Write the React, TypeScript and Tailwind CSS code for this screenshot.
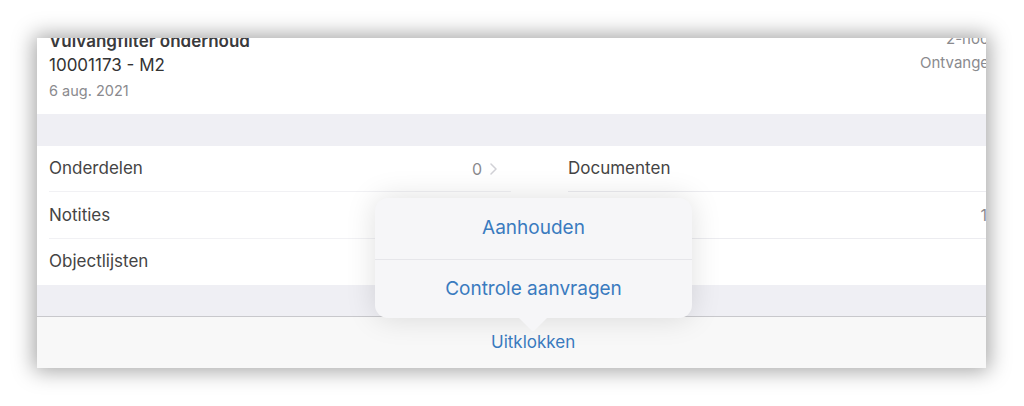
import React from 'react'

const rowsLeft = [
    { label: 'Onderdelen', value: '0' },
    { label: 'Notities', value: '' },
    { label: 'Objectlijsten', value: '' },
]

const rowsRight = [
    { label: 'Documenten', value: '' },
    { label: 'Meldingen', value: '1' },
    { label: '', value: '' },
]

const Chevron = () => (
    <svg width="7" height="12" viewBox="0 0 7 12" className="ml-[8px]">
        <path d="M1 1l5 5-5 5" fill="none" stroke="#d1d1d6" strokeWidth="1.5" strokeLinecap="round" strokeLinejoin="round" />
    </svg>
)

export default function App() {
    return (
        <div className="w-[1024px] h-[406px] bg-white overflow-hidden font-['Inter',_'Liberation_Sans',_sans-serif]">
            <div className="relative ml-[37px] mt-[38px] w-[949px] h-[330px] bg-white overflow-hidden shadow-[0_0_20px_3px_rgba(0,0,0,0.36)]">
                {/* Header */}
                <div className="flex h-[76px] bg-white">
                    <div className="flex-1 pl-[12px] flex flex-col">
                        <div className="mt-[-9px] h-[24px] leading-[24px] text-[17px] font-semibold text-[#3a3a3c] whitespace-nowrap">Vulvangfilter onderhoud</div>
                        <div className="h-[24px] leading-[24px] text-[17px] text-[#333]">10001173 - M2</div>
                        <div className="mt-[4px] h-[20px] leading-[20px] text-[14.5px] text-[#8a8a8e]">6 aug. 2021</div>
                    </div>
                    <div className="shrink-0 w-[66px] flex flex-col whitespace-nowrap">
                        <div className="mt-[-11px] h-[24px] leading-[24px] text-[15px] text-[#8a8a8e] pl-[26px]">2-hoog</div>
                        <div className="h-[24px] leading-[24px] text-[15px] text-[#8a8a8e]">Ontvangen</div>
                    </div>
                </div>

                <div className="h-[32px] bg-[#efeff4]" />

                {/* Rows */}
                <div className="flex h-[139px] bg-white">
                    <div className="w-[474px] flex flex-col">
                        {rowsLeft.map((r, i) => (
                            <div key={r.label} className="flex-1 flex items-center pl-[12px] relative">
                                <span className="text-[17px] text-[#444]">{r.label}</span>
                                {r.value && (
                                    <span className="ml-auto mr-[14px] flex items-center text-[16px] text-[#8a8a8e]">
                                        {r.value}
                                        <Chevron />
                                    </span>
                                )}
                                {i < rowsLeft.length - 1 && <div className="absolute left-[12px] right-0 bottom-0 h-px bg-[#f1f1f4]" />}
                            </div>
                        ))}
                    </div>
                    <div className="flex-1 flex flex-col">
                        {rowsRight.map((r, i) => (
                            <div key={i} className="flex-1 flex items-center pl-[57px] relative whitespace-nowrap">
                                <span className="text-[17px] text-[#444]">{r.label}</span>
                                {r.value && (
                                    <span className="ml-auto mr-[-16px] flex items-center text-[16px] text-[#8a8a8e]">
                                        {r.value}
                                        <Chevron />
                                    </span>
                                )}
                                {i < 2 && <div className="absolute left-[57px] right-0 bottom-0 h-px bg-[#ececf0]" />}
                            </div>
                        ))}
                    </div>
                </div>

                <div className="h-[31px] bg-[#efeff4]" />

                {/* Toolbar */}
                <div className="h-[52px] border-t border-[#c8c8cc] bg-[#f8f8f8] flex items-center pl-[454px]">
                    <span className="text-[17px] text-[#3a7bbf]">Uitklokken</span>
                </div>

                {/* Popover */}
                <div className="absolute left-[338px] top-[160px] w-[317px] h-[120px] rounded-[13px] bg-[#f6f6f8] shadow-[0_0_30px_rgba(0,0,0,0.13)] flex flex-col">
                    <div className="h-[62px] flex items-center justify-center border-b border-[#e6e6ea]">
                        <span className="text-[19px] text-[#3a7bbf]">Aanhouden</span>
                    </div>
                    <div className="flex-1 flex items-center justify-center">
                        <span className="text-[19px] text-[#3a7bbf]">Controle aanvragen</span>
                    </div>
                    <svg width="30" height="15" viewBox="0 0 30 15" className="absolute left-[143px] top-[119px]">
                        <path d="M0 0 L13 13 Q15 15 17 13 L30 0 Z" fill="#f6f6f8" />
                    </svg>
                </div>
            </div>
        </div>
    )
}
